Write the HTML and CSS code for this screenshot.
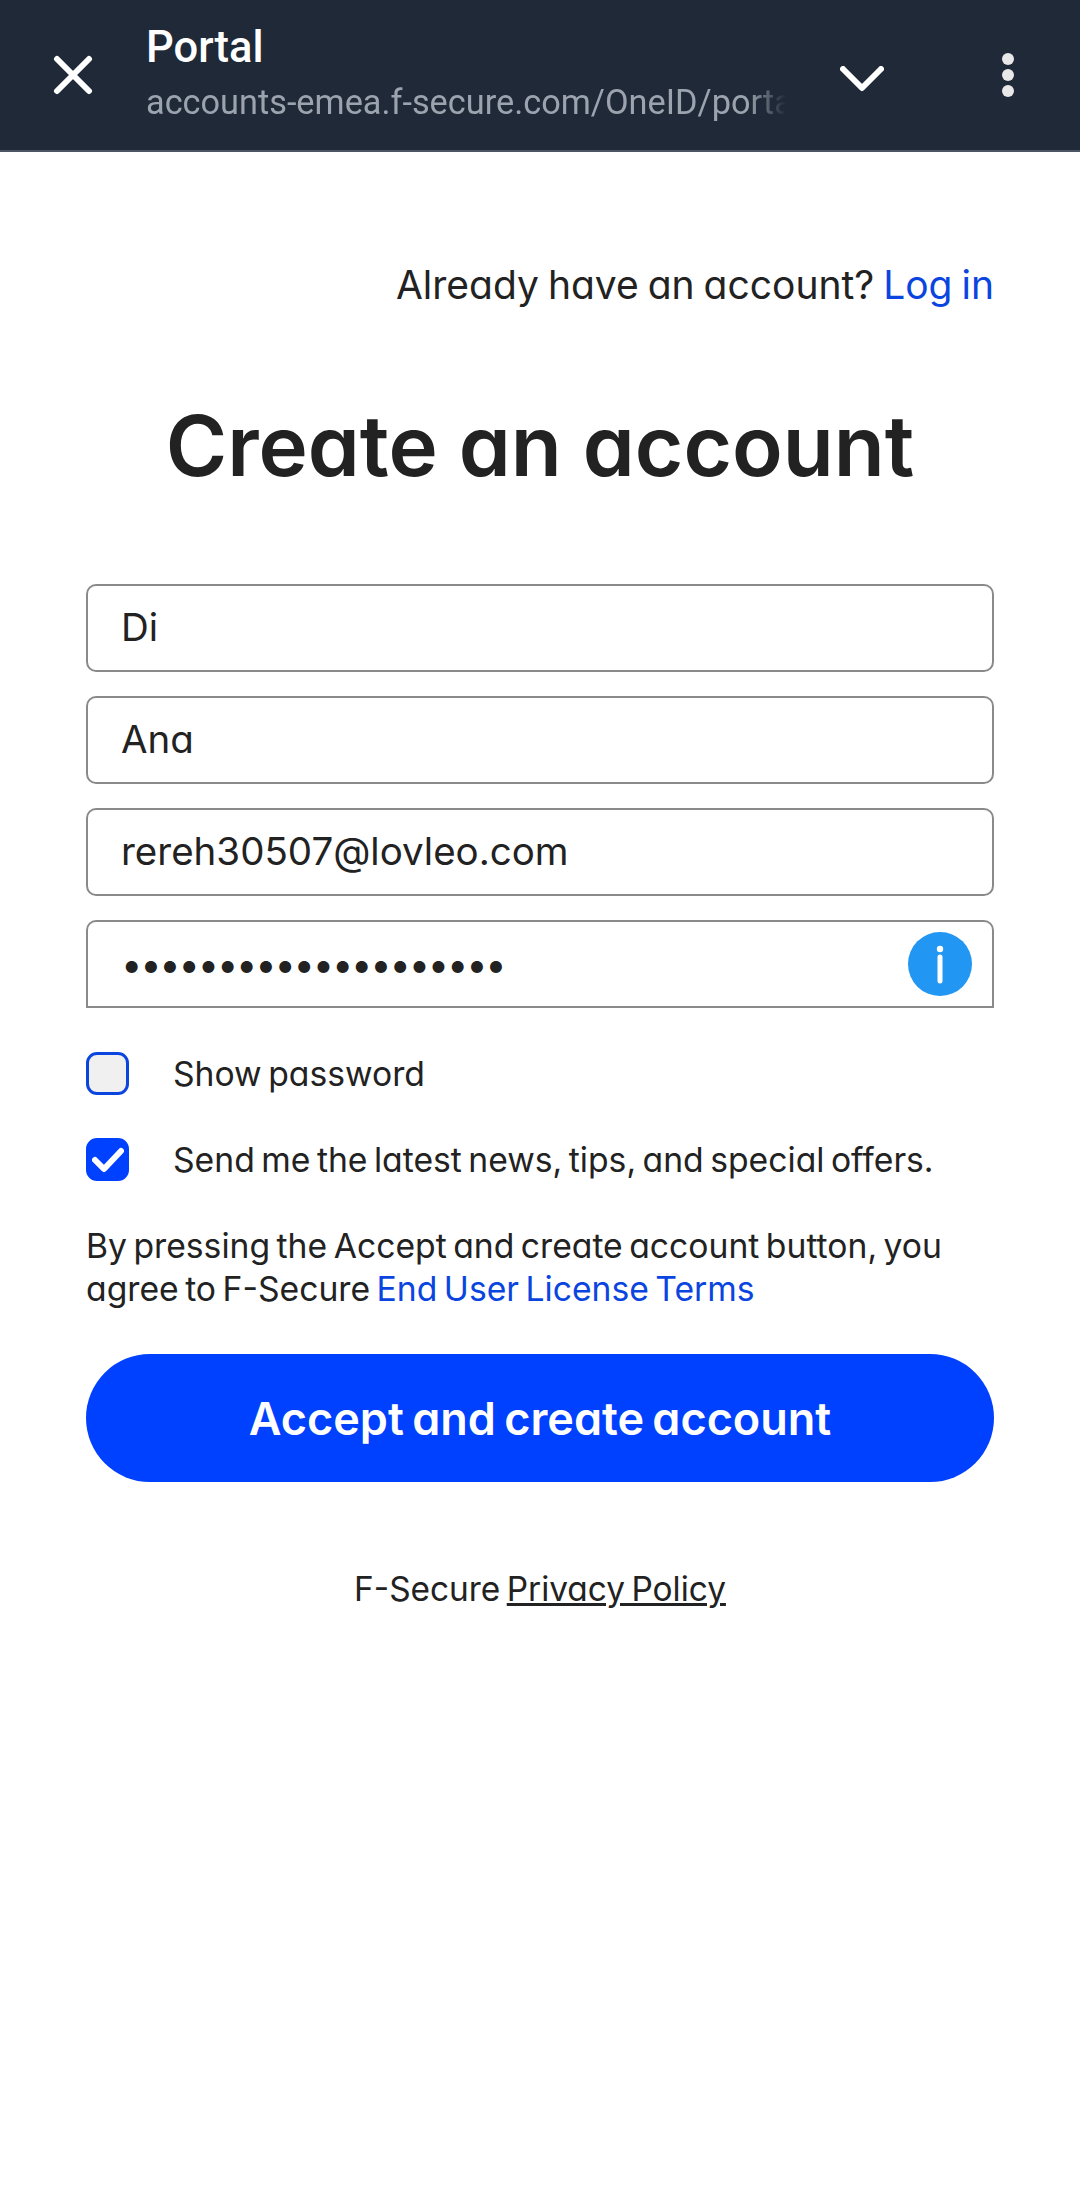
FILE: index.html
```html
<!DOCTYPE html>
<html lang="en">
<head>
	<meta charset="UTF-8">
	<title>Create an account</title>
	<link rel="stylesheet" href="styles.css">
</head>
<body>
	<div class="toolbar">
		<svg class="close-icon" width="40" height="40" viewBox="0 0 40 40"><path d="M4 4L36 36M36 4L4 36" stroke="#fff" stroke-width="6" stroke-linecap="round" fill="none"/></svg>
		<div class="page-info">
			<div class="page-title">Portal</div>
			<div class="page-url">accounts-emea.f-secure.com/OneID/porta</div>
		</div>
		<svg class="chevron-icon" width="44" height="26" viewBox="0 0 44 26"><path d="M3 3L22 22L41 3" stroke="#fff" stroke-width="6" stroke-linecap="round" stroke-linejoin="round" fill="none"/></svg>
		<div class="menu-dots"><span></span><span></span><span></span></div>
	</div>
	<div class="content">
		<p class="login-line">Already have an account? <a href="#">Log in</a></p>
		<h1>Create an account</h1>
		<div class="field">Di</div>
		<div class="field">Ana</div>
		<div class="field">rereh30507@lovleo.com</div>
		<div class="field field-password">
			<span class="dots">••••••••••••••••••••</span>
			<svg class="info-badge" width="64" height="64" viewBox="0 0 64 64"><circle cx="32" cy="32" r="32" fill="#2196f3"/><circle cx="32" cy="17" r="3.2" fill="#fff"/><path d="M32 25V49" stroke="#fff" stroke-width="5" stroke-linecap="round"/></svg>
		</div>
		<div class="check-row">
			<span class="checkbox"></span>
			<span>Show password</span>
		</div>
		<div class="check-row">
			<span class="checkbox checked">
				<svg width="32" height="26" viewBox="0 0 32 26"><path d="M3 13L12 22L29 4" stroke="#fff" stroke-width="6" stroke-linecap="round" stroke-linejoin="round" fill="none"/></svg>
			</span>
			<span>Send me the latest news, tips, and special offers.</span>
		</div>
		<p class="terms">By pressing the Accept and create account button, you agree to F-Secure <a href="#">End User License Terms</a></p>
		<button class="accept-btn">Accept and create account</button>
		<p class="privacy">F-Secure <a href="#">Privacy Policy</a></p>
	</div>
</body>
</html>
```

FILE: styles.css
```css
* {
	box-sizing: border-box;
}
body {
	margin: 0;
	background: #fff;
	color: #222;
	font-family: "Inter", "Liberation Sans", sans-serif;
	font-feature-settings: "cv11" 1;
}
a {
	color: #0b45e0;
	text-decoration: none;
}
.toolbar {
	height: 152px;
	background: #1f2937;
	border-bottom: 2px solid #4b5563;
	display: flex;
	align-items: center;
	font-family: "Roboto", sans-serif;
	font-feature-settings: normal;
}
.close-icon {
	margin-left: 53px;
	flex: none;
}
.page-info {
	width: 640px;
	margin-left: 53px;
	white-space: nowrap;
}
.page-title {
	color: #fff;
	font-size: 43.5px;
	font-weight: 500;
	line-height: 50px;
	margin-top: -5px;
}
.page-url {
	color: #9ca3af;
	font-size: 34.3px;
	line-height: 40px;
	margin-top: 9px;
	-webkit-mask-image: linear-gradient(to right, #000 94%, transparent 100%);
	mask-image: linear-gradient(to right, #000 94%, transparent 100%);
}
.chevron-icon {
	margin: 8px 0 0 54px;
	flex: none;
}
.menu-dots {
	margin-left: 118px;
	display: flex;
	flex-direction: column;
	gap: 4px;
}
.menu-dots span {
	width: 12px;
	height: 12px;
	border-radius: 50%;
	background: #e8e8e8;
}
.content {
	padding: 108px 86px 0;
}
.login-line {
	margin: 0;
	text-align: right;
	font-size: 39px;
	line-height: 50px;
	word-spacing: -2px;
}
h1 {
	margin: 86px 0 88px;
	text-align: center;
	font-size: 83.4px;
	font-weight: 600;
	line-height: 100px;
}
.field {
	height: 88px;
	margin-bottom: 24px;
	padding: 0 33px 2px;
	border: 2px solid #8a8a8a;
	border-radius: 10px;
	display: flex;
	align-items: center;
	font-size: 38.5px;
	line-height: 1;
}
.field-password {
	justify-content: space-between;
	padding: 0 20px 0 33px;
	border-bottom-left-radius: 0;
	border-bottom-right-radius: 0;
	margin-bottom: 44px;
}
.dots {
	font-size: 38px;
	letter-spacing: -2.2px;
}
.info-badge {
	flex: none;
}
.check-row {
	display: flex;
	align-items: center;
	gap: 44px;
	height: 43px;
	margin-bottom: 43px;
	font-size: 33.7px;
	word-spacing: -3px;
}
.checkbox {
	width: 43px;
	height: 43px;
	flex: none;
	border: 3px solid #0b45e0;
	border-radius: 11px;
	background: #f0f0f0;
	display: flex;
	align-items: center;
	justify-content: center;
}
.checkbox.checked {
	background: #0040ff;
	border-color: #0040ff;
}
.terms {
	margin: 0 0 44px;
	font-size: 33.7px;
	line-height: 43px;
	word-spacing: -3px;
}
.accept-btn {
	display: block;
	width: 100%;
	height: 128px;
	border: 0;
	border-radius: 64px;
	background: #0040ff;
	color: #fff;
	font-family: inherit;
	font-feature-settings: inherit;
	font-size: 45px;
	font-weight: 600;
	word-spacing: -3px;
}
.privacy {
	margin: 86px 0 0;
	text-align: center;
	font-size: 33.4px;
	line-height: 43px;
	word-spacing: -3px;
}
.privacy a {
	color: #222;
	text-decoration: underline;
}
```
